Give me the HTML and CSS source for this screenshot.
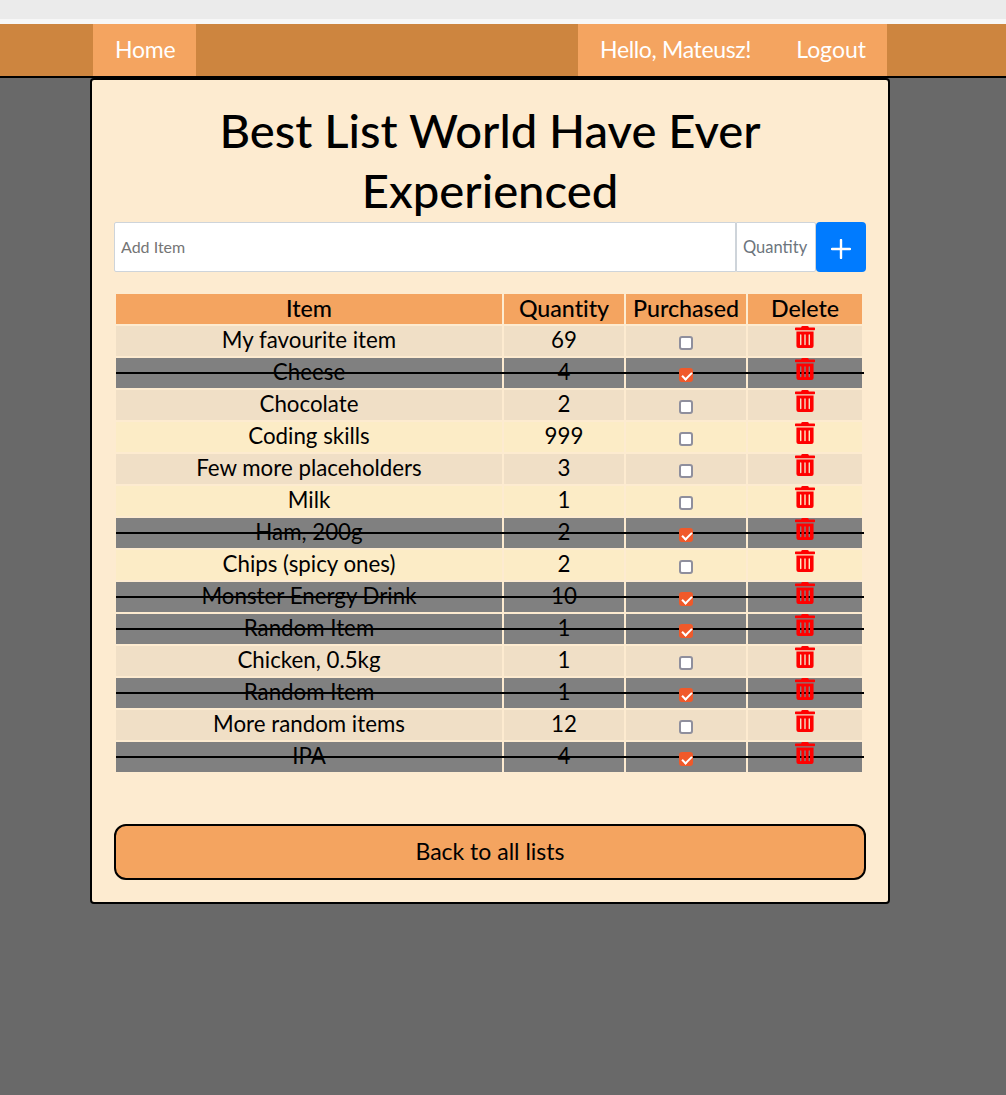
FILE: index.html
```html
<!DOCTYPE html>
<html lang="en">
<head>
    <meta charset="UTF-8">
    <meta name="viewport" content="width=device-width, initial-scale=1.0">
    <title>Best List World Have Ever Experienced</title>

    <link rel="stylesheet" href="styles.css">
</head>
<body>
    <svg class="defs" width="0" height="0">
        <symbol id="trash" viewBox="0 0 448 512" preserveAspectRatio="none">
            <path d="M32 464a48 48 0 0 0 48 48h288a48 48 0 0 0 48-48V128H32zm272-256a16 16 0 0 1 32 0v224a16 16 0 0 1-32 0zm-96 0a16 16 0 0 1 32 0v224a16 16 0 0 1-32 0zm-96 0a16 16 0 0 1 32 0v224a16 16 0 0 1-32 0zM432 32H312l-9.4-18.7A24 24 0 0 0 281.1 0H166.8a23.72 23.72 0 0 0-21.4 13.3L136 32H16A16 16 0 0 0 0 48v32a16 16 0 0 0 16 16h416a16 16 0 0 0 16-16V48a16 16 0 0 0-16-16z"/>
        </symbol>
    </svg>

    <div class="browser-strip"></div>

    <nav class="navbar">
        <div class="nav-inner">
            <div class="nav-group">
                <a class="nav-link nav-home" href="#">Home</a>
            </div>
            <div class="nav-group">
                <span class="nav-link nav-hello">Hello, Mateusz!</span>
                <a class="nav-link nav-logout" href="#">Logout</a>
            </div>
        </div>
    </nav>

    <main class="card">
        <h1 class="list-title">Best List World Have Ever Experienced</h1>

        <form class="add-form">
            <input class="field field-item" type="text" placeholder="Add Item">
            <input class="field field-qty" type="text" placeholder="Quantity">
            <button class="add-btn" type="button" aria-label="Add">
                <svg width="20" height="20" viewBox="0 0 20 20"><path d="M10 1v18M1 10h18" stroke="#fff" stroke-width="2.4" stroke-linecap="round"/></svg>
            </button>
        </form>

        <table class="items">
            <thead>
                <tr>
                    <th class="col-item">Item</th>
                    <th class="col-qty">Quantity</th>
                    <th class="col-bought">Purchased</th>
                    <th class="col-del">Delete</th>
                </tr>
            </thead>
            <tbody>
                <tr><td>My favourite item</td><td>69</td><td><input type="checkbox"></td><td><svg class="trash"><use href="#trash"/></svg></td></tr>
                <tr class="done"><td>Cheese</td><td>4</td><td><input type="checkbox" checked></td><td><svg class="trash"><use href="#trash"/></svg></td></tr>
                <tr><td>Chocolate</td><td>2</td><td><input type="checkbox"></td><td><svg class="trash"><use href="#trash"/></svg></td></tr>
                <tr><td>Coding skills</td><td>999</td><td><input type="checkbox"></td><td><svg class="trash"><use href="#trash"/></svg></td></tr>
                <tr><td>Few more placeholders</td><td>3</td><td><input type="checkbox"></td><td><svg class="trash"><use href="#trash"/></svg></td></tr>
                <tr><td>Milk</td><td>1</td><td><input type="checkbox"></td><td><svg class="trash"><use href="#trash"/></svg></td></tr>
                <tr class="done"><td>Ham, 200g</td><td>2</td><td><input type="checkbox" checked></td><td><svg class="trash"><use href="#trash"/></svg></td></tr>
                <tr><td>Chips (spicy ones)</td><td>2</td><td><input type="checkbox"></td><td><svg class="trash"><use href="#trash"/></svg></td></tr>
                <tr class="done"><td>Monster Energy Drink</td><td>10</td><td><input type="checkbox" checked></td><td><svg class="trash"><use href="#trash"/></svg></td></tr>
                <tr class="done"><td>Random Item</td><td>1</td><td><input type="checkbox" checked></td><td><svg class="trash"><use href="#trash"/></svg></td></tr>
                <tr><td>Chicken, 0.5kg</td><td>1</td><td><input type="checkbox"></td><td><svg class="trash"><use href="#trash"/></svg></td></tr>
                <tr class="done"><td>Random Item</td><td>1</td><td><input type="checkbox" checked></td><td><svg class="trash"><use href="#trash"/></svg></td></tr>
                <tr><td>More random items</td><td>12</td><td><input type="checkbox"></td><td><svg class="trash"><use href="#trash"/></svg></td></tr>
                <tr class="done"><td>IPA</td><td>4</td><td><input type="checkbox" checked></td><td><svg class="trash"><use href="#trash"/></svg></td></tr>
            </tbody>
        </table>

        <a class="back-btn" href="#">Back to all lists</a>
    </main>
</body>
</html>
```

FILE: styles.css
```css
* { box-sizing: border-box; }

body {
    margin: 0;
    min-height: 1095px;
    background: #696969;
    font-family: Lato, "Noto Sans", sans-serif;
    font-variant-ligatures: none;
    color: #000;
}

.defs { display: block; height: 0; }

.browser-strip {
    height: 24px;
    background: #ebebeb;
    border-bottom: 5px solid #f7f7f7;
}

/* navbar */
.navbar {
    background: #cd853f;
    border-bottom: 2px solid #000;
}

.nav-inner {
    display: flex;
    justify-content: space-between;
    width: 794px;
    margin-left: 93px;
}

.nav-group {
    display: flex;
    background: #f4a460;
}

.nav-link {
    height: 52px;
    padding: 0 22px;
    font-size: 23px;
    line-height: 50px;
    color: #fff;
    text-decoration: none;
}

.nav-home { width: 103px; letter-spacing: -0.25px; }
.nav-hello { letter-spacing: -0.35px; }
.nav-logout { padding: 0 21px 0 23px; }

/* card */
.card {
    width: 800px;
    height: 826px;
    margin-left: 90px;
    padding: 22px;
    background: #fdebd0;
    border: 2px solid #000;
    border-radius: 4px;
}

.list-title {
    margin: -2px 30px 2px;
    font-size: 47.2px;
    font-weight: 500;
    line-height: 60px;
    text-align: center;
}

.add-form {
    display: flex;
    height: 50px;
}

.field {
    height: 50px;
    padding: 0 6px 2px;
    background: #fff;
    border: 1px solid #ced4da;
    font-family: inherit;
    outline: none;
}

.field::placeholder { color: #757575; opacity: 1; }

.field-item {
    flex: 1;
    min-width: 0;
    font-size: 16px;
    border-radius: 2px 0 0 2px;
}

.field-qty {
    width: 80px;
    padding-bottom: 0;
    font-size: 16.5px;
    border-radius: 0 2px 2px 0;
}

.field-qty::placeholder { color: #6c757d; }

.add-btn {
    display: flex;
    align-items: center;
    justify-content: center;
    width: 50px;
    height: 50px;
    padding: 4px 0 0;
    background: #007bff;
    border: 0;
    border-radius: 4px;
}

/* table */
.items {
    width: 750px;
    margin-top: 20px;
    table-layout: fixed;
    border-collapse: separate;
    border-spacing: 2px;
    font-size: 22.3px;
    text-align: center;
}

.col-item { width: 386px; }
.col-qty { width: 120px; }
.col-bought { width: 120px; }
.col-del { width: 114px; }

.items th {
    height: 30px;
    padding: 0 0 2px;
    background: #f4a460;
    font-size: 23.2px;
    font-weight: 500;
    line-height: 28px;
}

.items td {
    height: 30px;
    padding: 0;
    line-height: 28px;
    vertical-align: top;
    background: #fcecc6;
}

.items tbody tr:nth-child(odd) td { background: #f0dfc6; }
.items tbody tr.done td { background: #808080; }

.items tr.done { position: relative; }

/* strike line runs over the whole row, checkbox and bin stay on top */
.items tr.done::after {
    content: "";
    position: absolute;
    left: 0;
    right: 0;
    top: 14px;
    height: 2px;
    background: #000;
}

.items input {
    appearance: none;
    display: block;
    width: 14px;
    height: 14px;
    margin: 10px auto 0 53px;
    position: relative;
    z-index: 1;
    background: #fff;
    border: 2px solid #8f8f9d;
    border-radius: 3px;
}

.items input:checked {
    background: #f0592a;
    border-color: #f0592a;
}

.items input:checked::after {
    content: "";
    position: absolute;
    left: 3px;
    top: 0;
    width: 4px;
    height: 8px;
    border: solid #fff;
    border-width: 0 2px 2px 0;
    transform: rotate(45deg);
}

.trash {
    display: block;
    width: 20px;
    height: 22px;
    margin: 0 auto;
    position: relative;
    z-index: 1;
    fill: #f00;
}

.back-btn {
    display: block;
    height: 56px;
    margin-top: 50px;
    background: #f4a460;
    border: 2px solid #000;
    border-radius: 12px;
    font-size: 23px;
    line-height: 50px;
    text-align: center;
    color: #000;
    text-decoration: none;
}
```
